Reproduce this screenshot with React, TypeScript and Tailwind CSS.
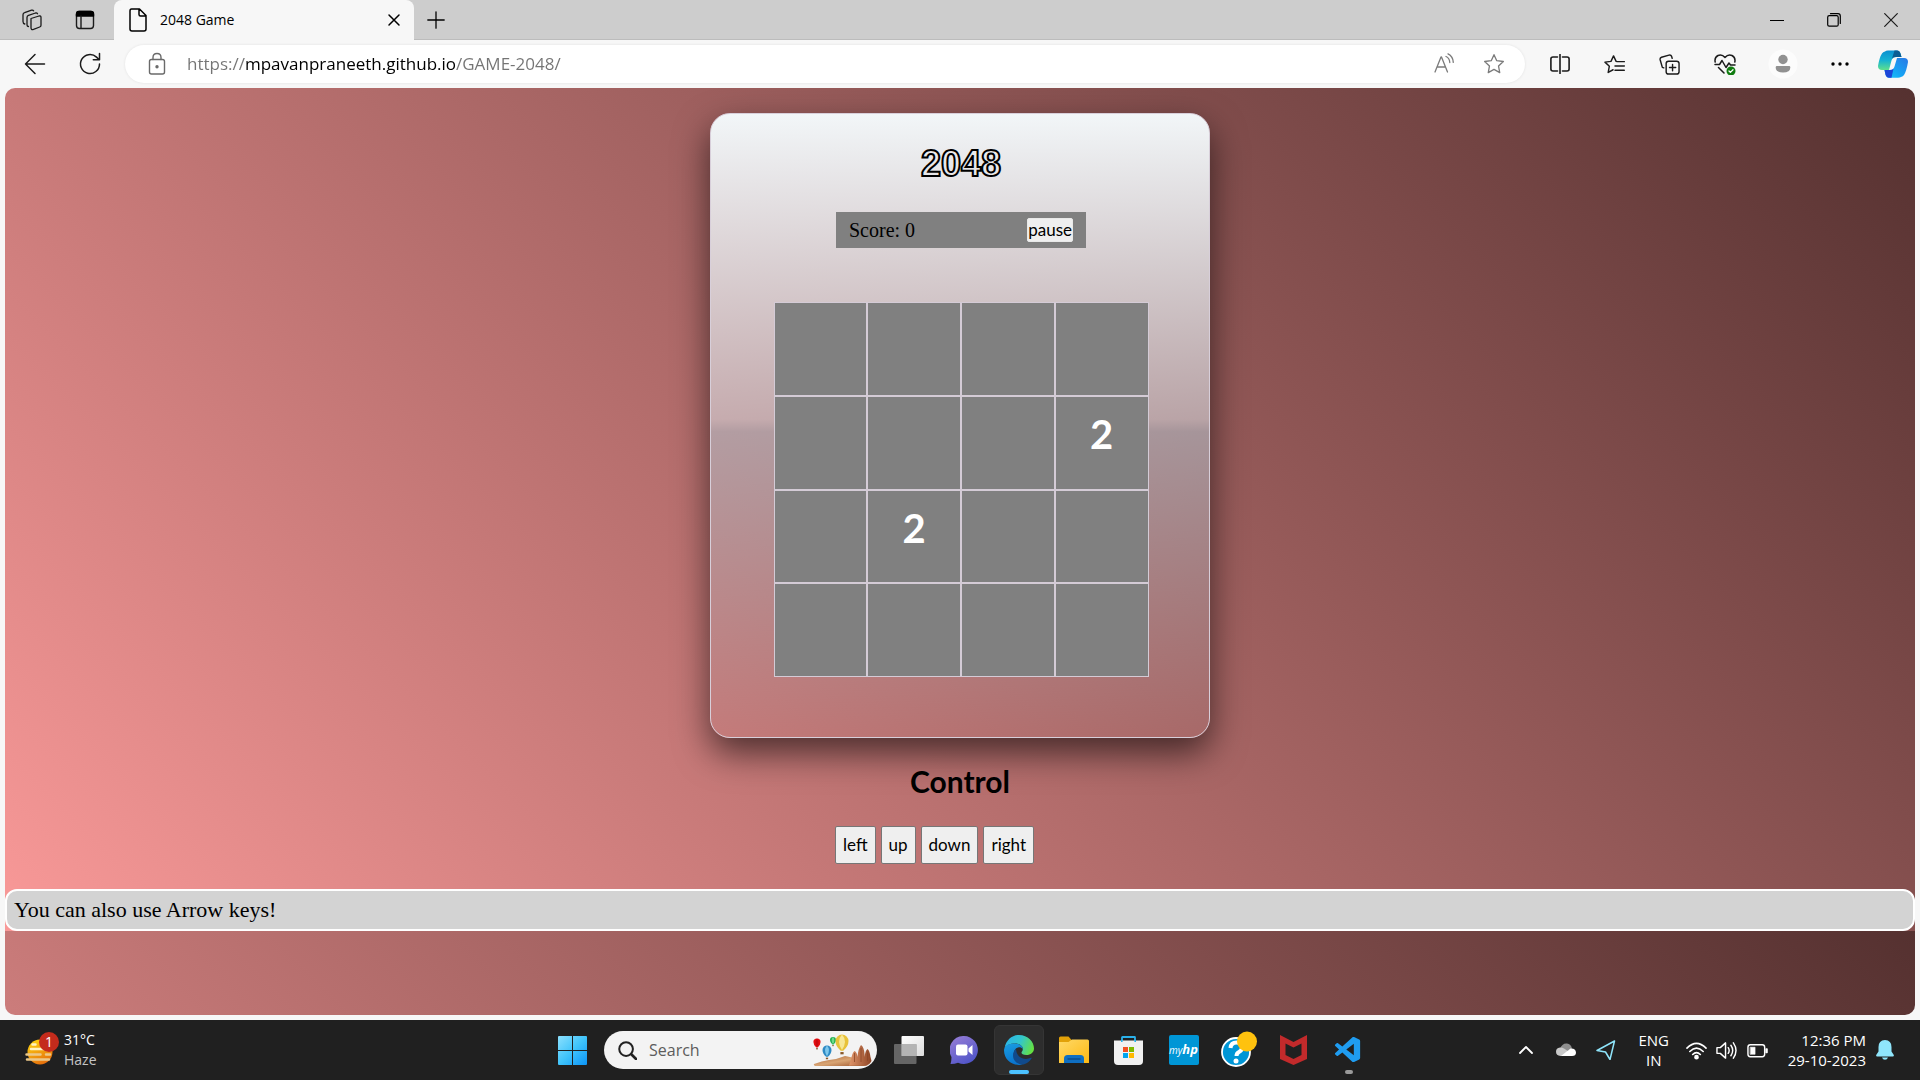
import type { ReactNode } from "react";
import { VscVscode } from "react-icons/vsc";

const CELLS: (number | null)[] = [
  null, null, null, null,
  null, null, null, 2,
  null, 2, null, null,
  null, null, null, null,
];

function IconButton({ label, className, children }: { label: string; className: string; children: ReactNode }) {
  return (
    <button type="button" aria-label={label} className={`flex shrink-0 items-center justify-center ${className}`}>
      {children}
    </button>
  );
}

function Line({ size, vb = 20, width = 1.1, color = "#1b1b1b", children }: { size: number; vb?: number; width?: number; color?: string; children: ReactNode }) {
  return (
    <svg width={size} height={size} viewBox={`0 0 ${vb} ${vb}`} fill="none" stroke={color} strokeWidth={width} strokeLinecap="round" strokeLinejoin="round">
      {children}
    </svg>
  );
}

function TitleBar() {
  return (
    <header className="flex h-10 items-stretch bg-[#cdcdcd] shadow-[inset_0_-1px_0_#bcbcbc]">
      <IconButton label="Workspaces" className="ml-1 w-14">
        <Line size={24} vb={24} width={1.3}>
          <path d="M11 10.5 19 8q2-.5 2 1.4v7.800q0 1.300-1.300 1.800L13.500 21.400Q11 22.200 11 19.800z" />
          <path d="M8.500 18.500Q7 18.500 7 16.500V9.500Q7 8 8.500 7.400L15.500 5q1.500-.3 2 .7" />
          <path d="M4.800 16Q3 15.500 3 13.500V6.800Q3 5.200 4.600 4.700L11.600 2.200q1.400-.4 2 .6" />
        </Line>
      </IconButton>
      <IconButton label="Tab actions" className="w-[50px]">
        <Line size={20} width={1.4}>
          <rect x="1.500" y="1.500" width="17" height="17" rx="3" />
          <path d="M2 2.500Q2 1.500 4 1.500H16Q18.500 1.500 18.500 3.500V6H1.500V4Z" fill="#000" stroke="#000" />
          <path d="M6 6v12" />
        </Line>
      </IconButton>
      <div className="ml-1 flex w-[300px] items-center rounded-t-lg bg-[#f7f7f7] pr-2 pl-3">
        <Line size={24} vb={24} width={1.5} color="#000">
          <path d="M5.500 1h8L20 7.500V21q0 2-2 2H6q-2 0-2-2V3q0-2 1.500-2zM13 1v5.500q0 1.500 1.500 1.500H20" />
        </Line>
        <span className="ml-[10px] text-sm text-black">2048 Game</span>
        <IconButton label="Close tab" className="ml-auto size-6">
          <Line size={14} vb={14} width={1.5} color="#000"><path d="m2 2 10 10M12 2 2 12" /></Line>
        </IconButton>
      </div>
      <IconButton label="New tab" className="w-11">
        <Line size={18} vb={18} width={1.3} color="#000"><path d="M9 .8v16.400M.8 9h16.400" /></Line>
      </IconButton>
      <div className="ml-auto flex pr-px">
        <IconButton label="Minimize" className="w-[57px]">
          <Line size={14} vb={14} width={1.2} color="#000"><path d="M.5 7.500h13" /></Line>
        </IconButton>
        <IconButton label="Restore" className="w-[57px]">
          <Line size={14} vb={14} width={1.2} color="#000">
            <rect x=".7" y="2.700" width="10.500" height="10.500" rx="1.500" />
            <path d="M3.500.7H11q2.300 0 2.300 2.300v7.500" />
          </Line>
        </IconButton>
        <IconButton label="Close" className="w-[57px]">
          <Line size={14} vb={14} width={1.2}><path d="m.7.7 12.600 12.600M13.300.7.7 13.300" /></Line>
        </IconButton>
      </div>
    </header>
  );
}

const STAR = "M10 1.500 12.500 7l6 .7-4.400 4.100 1.100 6L10 14.900 4.800 17.800l1.100-6L1.500 7.700l6-.7z";

function Toolbar() {
  return (
    <div className="flex h-12 items-center bg-[#f7f7f7] pl-2">
      <IconButton label="Back" className="w-[54px]">
        <Line size={22} vb={22} width={1.5}><path d="M20.500 11H1.500M11 1.500 1.500 11l9.500 9.500" /></Line>
      </IconButton>
      <IconButton label="Refresh" className="w-[55px]">
        <Line size={24} vb={24} width={1.5}><path d="M21.500 12A9.500 9.500 0 1 1 18.500 5.100L21 7.500M21.500 1.500v6.200h-6.200" /></Line>
      </IconButton>
      <div className="ml-2 flex h-[38px] min-w-0 flex-1 items-center rounded-full bg-white shadow-[0_0_3px_rgba(0,0,0,0.09)]">
        <IconButton label="View site information" className="ml-5 w-6">
          <Line size={24} vb={24} width={1.4} color="#6a6a6a">
            <rect x="4.500" y="7.500" width="15" height="14.500" rx="2" />
            <path d="M8 7.500V5.500q0-4 4-4t4 4v2" />
            <circle cx="12" cy="14.800" r="1" fill="#6a6a6a" />
          </Line>
        </IconButton>
        <input
          type="text"
          aria-label="Address"
          defaultValue="https://mpavanpraneeth.github.io/GAME-2048/"
          className="ml-[18px] h-8 min-w-0 flex-1 bg-[linear-gradient(90deg,#747474_58px,#000_58px,#000_269px,#747474_269px)] bg-clip-text pb-[2px] text-[17px] text-transparent outline-none"
        />
        <IconButton label="Read aloud" className="w-[50px]">
          <Line size={22} vb={22} width={1.3} color="#7b7b7b">
            <path d="M2 19 8 4h.5l6 15M4 14h8.500M13 3.500q3.500 1.500 3.800 6M15 .9q5 2.500 5.300 8.500" />
          </Line>
        </IconButton>
        <IconButton label="Add to favorites" className="mr-[6px] w-[50px]">
          <Line size={22} width={1.2} color="#7b7b7b"><path d={STAR} /></Line>
        </IconButton>
      </div>
      <IconButton label="Split screen" className="ml-[7px] w-[55px]">
        <Line size={20} width={1.600}>
          <path d="M7.500 3H3Q.9 3 .9 5v10Q.9 17 3 17h4.500M12.500 3H17q2.100 0 2.100 2v10q0 2-2.100 2h-4.500M10 .5v19" />
        </Line>
      </IconButton>
      <IconButton label="Favorites" className="w-[55px]">
        <Line size={21} vb={22} width={1.500}>
          <path d="M13.800 8 12.700 7.700 10 2 7.300 7.700 1 8.500l4.600 4.300-1.200 6.500L9.500 16.500M14 8h7.300M11.500 12.500h9.800M11.500 17h9.800" />
        </Line>
      </IconButton>
      <IconButton label="Collections" className="w-[55px]">
        <Line size={21} vb={22} width={1.500}>
          <rect x="7.500" y="7.500" width="13.500" height="13.500" rx="2.500" />
          <path d="M14.200 11v6.500M11 14.200h6.500M5 14.500 3.500 14 1.200 6Q.8 4 2.600 3.400L10.500 1.200Q12.500.8 13.200 2.500L13.800 4.500" />
        </Line>
      </IconButton>
      <IconButton label="Browser essentials" className="w-[55px]">
        <Line size={22} vb={22} width={1.500}>
          <path d="M1.200 9Q.2 4.500 4 2.500 8 1 11 4.500 14 1 18 2.500 21.800 4.500 20.800 9M1 11.500h4.500L8 7.500l4 7 3-4.500 1.500 2h4.500M4.500 14.500 10 20" />
          <circle cx="17" cy="18" r="4.500" fill="#107c10" stroke="none" />
          <path d="m15 18 1.400 1.400L19 16.800" stroke="#fff" strokeWidth={1.300} />
        </Line>
      </IconButton>
      <IconButton label="Profile" className="w-[62px]">
        <svg width="30" height="30" viewBox="0 0 30 30">
          <circle cx="15" cy="15" r="14.500" fill="#fcfcfc" />
          <circle cx="15" cy="10.500" r="4.700" fill="#919191" />
          <path d="M8.500 17h13q.8 0 .8 1.500 0 5-7.300 5t-7.300-5q0-1.500.8-1.500z" fill="#919191" />
        </svg>
      </IconButton>
      <IconButton label="Settings and more" className="w-[52px]">
        <svg width="18" height="4" viewBox="0 0 18 4"><circle cx="2" cy="2" r="1.700" /><circle cx="9" cy="2" r="1.700" /><circle cx="16" cy="2" r="1.700" /></svg>
      </IconButton>
      <IconButton label="Copilot" className="w-[54px]">
        <svg width="30" height="28" viewBox="0 0 30 28">
          <defs>
            <linearGradient id="cpA" x1="0" y1="0" x2="0" y2="1"><stop offset="0" stopColor="#0a8fd0" /><stop offset=".5" stopColor="#15b2d3" /><stop offset="1" stopColor="#5fe08c" /></linearGradient>
            <linearGradient id="cpB" x1="1" y1="0" x2="0" y2="1"><stop offset="0" stopColor="#2a78e4" /><stop offset=".6" stopColor="#16a6f5" /><stop offset="1" stopColor="#1bc8f4" /></linearGradient>
          </defs>
          <path d="M7 1.500Q8 .5 10 .5h9q2.500 0 3.500 3L23.500 7H18q-3.500 0-4.500 3.500L11 20H4Q0 20 0 16 1.500 7 4 3.500 5 1.800 7 1.500z" fill="url(#cpA)" />
          <path d="M16.500.5H19q2.500 0 3.500 3L23.500 7H18Q14.500 7 13.800 9z" fill="#0b5d93" />
          <path d="M23 27q-1 .7-3 .7h-9q-2.500 0-3.500-3L6.500 20H12q3.500 0 4.500-3.500L19 8h7q4 0 4 4-1.500 9-4 13-1 1.700-3 2z" fill="url(#cpB)" />
          <path d="M13.500 27.700H11q-2.500 0-3.500-3L6.500 20H12q2.500 0 3.500-1.500z" fill="#1d45d8" />
        </svg>
      </IconButton>
    </div>
  );
}

function GameCard() {
  return (
    <section className="flex h-[625px] w-[500px] flex-col items-center rounded-[20px] border border-[#d8cfda] bg-[linear-gradient(180deg,rgba(242,246,248,1)_0%,rgba(216,225,231,0.55)_49%,rgba(181,198,208,0.55)_51%,rgba(224,239,249,0.03)_100%)] pl-[2px] shadow-[0_15px_35px_rgba(0,0,0,0.6)]">
      <h1 className="mt-[26px] font-['Liberation_Sans',sans-serif] text-[36px] leading-[48px] font-bold text-transparent [-webkit-text-stroke:2px_#000]">2048</h1>
      <div className="mt-6 flex h-9 w-[250px] items-center justify-between bg-[gray] px-[13px]">
        <span className="font-['Liberation_Serif'] text-xl text-black">Score: 0</span>
        <button type="button" className="h-6 rounded-[2px] border border-[#e8e8e8] bg-[#efefef] font-['Lato'] text-[17px] leading-5 text-black">pause</button>
      </div>
      <div className="mt-[54px] grid h-[375px] w-[375px] grid-cols-4 grid-rows-4">
        {CELLS.map((value, i) => (
          <div key={i} className="flex justify-center border border-[#d4cbd6] bg-[gray] pt-[9px] font-['Lato'] text-[40px] leading-[56px] font-bold text-white">
            {value}
          </div>
        ))}
      </div>
    </section>
  );
}

function GamePage() {
  return (
    <main className="mx-[5px] mb-[5px] flex flex-1 flex-col overflow-hidden rounded-[10px] bg-[linear-gradient(45deg,#f99998,#553130)] bg-[length:100%_843px]">
      <div className="mt-[25px] flex flex-col items-center">
        <GameCard />
        <h2 className="mt-[23px] font-['Lato'] text-[30px] leading-10 font-bold text-black">Control</h2>
        <div className="mt-[25px] flex w-[250px] gap-[5px]">
          {["left", "up", "down", "right"].map((d) => (
            <button key={d} type="button" className="h-[38px] rounded-[2px] border border-[#767676] bg-[#efefef] px-[7px] font-['Lato'] text-[17px] text-black">
              {d}
            </button>
          ))}
        </div>
      </div>
      <p className="mt-[25px] h-[42px] rounded-xl border-2 border-white bg-[#d3d3d3] px-[7px] font-['Liberation_Serif'] text-[22px] leading-[38px] text-black">
        You can also use Arrow keys!
      </p>
    </main>
  );
}

function WeatherIcon() {
  return (
    <svg width="36" height="36" viewBox="0 0 36 36">
      <defs>
        <linearGradient id="sun" x1=".2" y1="0" x2=".7" y2="1"><stop offset="0" stopColor="#ffd40f" /><stop offset="1" stopColor="#e46a0c" /></linearGradient>
      </defs>
      <circle cx="16" cy="20" r="12.500" fill="url(#sun)" />
      <path d="M8.500 12.500h3M7 17h16" stroke="#fff3c4" strokeWidth="2.500" strokeLinecap="round" />
      <path d="M2.500 22.500h14M22 22.500h4M3 27.500h22" stroke="#ecc889" strokeWidth="2.500" strokeLinecap="round" />
      <circle cx="25" cy="10" r="10" fill="#c42b1c" />
      <text x="25" y="15" textAnchor="middle" fontSize="14" fill="#fff" fontFamily="Open Sans">1</text>
    </svg>
  );
}

function Balloon({ x, y, r, fill, stripe }: { x: number; y: number; r: number; fill: string; stripe: string }) {
  return (
    <g>
      <path d={`M${x - r} ${y}a${r} ${r} 0 0 1 ${2 * r} 0q0 ${r * 0.8} ${-r * 0.8} ${r * 1.5}h${-r * 0.4}q${-r * 0.8} ${-r * 0.7} ${-r * 0.8} ${-r * 1.5}z`} fill={fill} />
      <path d={`M${x} ${y - r}q${-r * 0.9} ${r} 0 ${r * 2.4}q${r * 0.9} ${-r * 1.4} 0 ${-r * 2.4}`} fill={stripe} />
      <rect x={x - r * 0.25} y={y + r * 1.7} width={r * 0.5} height={r * 0.35} fill="#8a5a2b" />
    </g>
  );
}

function Balloons() {
  return (
    <svg width="60" height="34" viewBox="0 0 60 34">
      <defs>
        <linearGradient id="rock" x1="0" y1="0" x2="1" y2="0"><stop offset="0" stopColor="#e0956a" /><stop offset="1" stopColor="#8e4424" /></linearGradient>
        <linearGradient id="dune" x1="0" y1="0" x2="1" y2="1"><stop offset="0" stopColor="#a65f33" /><stop offset=".5" stopColor="#d9a574" /><stop offset="1" stopColor="#9c5228" /></linearGradient>
      </defs>
      <path d="M1 31q8-3 15-4 9-1 16-4 8 1 12 4l11 5q-2 1-5 1H4q-4 0-3-2z" fill="url(#dune)" />
      <path d="M36 32.500 38 27q1-7 3.500-9 2.500 1 3 6 .5-8 3.500-12 3 2 3.500 9v3q1-7 3-8 2 1 3 8l1 4q-2 4-6 4.500z" fill="url(#rock)" />
      <path d="M41.500 20v9M48 15v14M54.500 19v9" stroke="#8b4728" strokeWidth=".8" />
      <Balloon x={4} y={9} r={3.6} fill="#e60f12" stripe="#c9090d" />
      <Balloon x={20} y={7} r={3} fill="#1fae4e" stripe="#6fd98b" />
      <Balloon x={14} y={17} r={4.5} fill="#2e8ac4" stripe="#7fc8ec" />
      <Balloon x={29} y={8} r={6.5} fill="#e8c23a" stripe="#f7e795" />
    </svg>
  );
}

function EdgeIcon() {
  return (
    <svg width="30" height="30" viewBox="0 0 30 30">
      <defs>
        <linearGradient id="edTop" x1="0" y1=".3" x2="1" y2=".6"><stop offset="0" stopColor="#2bb4e8" /><stop offset=".5" stopColor="#33c6cb" /><stop offset="1" stopColor="#66e23f" /></linearGradient>
        <linearGradient id="edLeft" x1="0" y1="0" x2=".3" y2="1"><stop offset="0" stopColor="#1a9ee2" /><stop offset="1" stopColor="#0a74cd" /></linearGradient>
      </defs>
      <path d="M.6 13C2 5 8 0 15 0c9 0 15 6.500 15 13.500 0 4-3.500 6.500-7.500 6.500-3.500 0-5-1.300-5-2.300 0-.8 1.300-1.500 1.300-3.700C18.800 10.500 15 8.500 11 8.500 6 8.500 2 10.500.6 13z" fill="url(#edTop)" />
      <path d="M0 15C.5 10.500 5 8.500 10.500 8.500c5 0 8.300 2.700 8.300 5.500-1-1.300-2.500-1.900-4-1.700-4 .5-5.800 4.700-4.600 8.700 1 4.300 4.500 7.500 8.500 8.500C9 31.500 0 25.500 0 15z" fill="url(#edLeft)" />
      <path d="M12 13.800c-3.500 3-4 8.500-1 12.200 2.300 3 5.700 4 8.500 3.400 3.500-1 6.300-3.200 8-6 .3-.5-.1-.9-.6-.6-6 3-14.500.3-14.900-9z" fill="#114a8b" />
    </svg>
  );
}

function Taskbar() {
  const app = "w-[55px] h-full";
  return (
    <footer className="grid h-[60px] grid-cols-[1fr_auto_1fr] items-center bg-[#202020] text-white">
      <button type="button" className="flex items-center pl-6 text-left">
        <WeatherIcon />
        <span className="ml-1 flex flex-col text-sm leading-5">
          <span>31°C</span>
          <span className="text-[#c4c4c4]">Haze</span>
        </span>
      </button>

      <nav className="flex h-full items-center" aria-label="Apps">
        <IconButton label="Start" className="h-full w-14">
          <svg width="29" height="29" viewBox="0 0 29 29">
            <defs><linearGradient id="win" x1="0" y1="0" x2="1" y2="1"><stop offset="0" stopColor="#8ce0fd" /><stop offset=".5" stopColor="#40c4fb" /><stop offset="1" stopColor="#0c94f7" /></linearGradient></defs>
            <path d="M0 1q0-1 1-1h13v14H0zM15 0h13q1 0 1 1v13H15zM0 15h14v14H1q-1 0-1-1zM15 15h14v13q0 1-1 1H15z" fill="url(#win)" />
          </svg>
        </IconButton>
        <div className="mr-1 ml-1 flex h-[38px] w-[273px] items-center rounded-full bg-[#f3f3f3] pr-1 pl-[14px]">
          <Line size={19} width={2.100} color="#222"><circle cx="8.500" cy="8.500" r="7.200" /><path d="m14 14 5 5" strokeWidth="2.800" /></Line>
          <input type="search" aria-label="Search" placeholder="Search" className="ml-3 h-8 w-0 min-w-0 flex-1 bg-transparent text-base text-[#333] outline-none placeholder:text-[#5c5c5c]" />
          <Balloons />
        </div>
        <IconButton label="Task view" className={app}>
          <svg width="30" height="28" viewBox="0 0 30 28">
            <defs><linearGradient id="tv" x1="0" y1="0" x2="1" y2="1"><stop offset="0" stopColor="#fff" /><stop offset="1" stopColor="#dcdcdc" /></linearGradient></defs>
            <rect x="7.500" y="0" width="22.500" height="20" rx="1" fill="url(#tv)" />
            <rect x="0" y="8" width="22.500" height="20" rx="1" fill="#777" fillOpacity=".8" />
            <path d="M7.500 8h15v12h-15z" fill="#b4b4b4" />
          </svg>
        </IconButton>
        <IconButton label="Chat" className={app}>
          <svg width="28" height="28" viewBox="0 0 28 28">
            <defs><linearGradient id="chat" x1="0" y1="0" x2=".6" y2="1"><stop offset="0" stopColor="#9a7fd6" /><stop offset="1" stopColor="#5256c9" /></linearGradient></defs>
            <path d="M14 0a14 14 0 1 1-6 26.700Q5 28 .5 28 1.500 25 1.500 21A14 14 0 0 1 14 0z" fill="url(#chat)" />
            <rect x="6" y="8.500" width="11.500" height="11" rx="2" fill="#fff" />
            <path d="m18.500 12.500 4-3.500v10l-4-3.500z" fill="#fff" />
          </svg>
        </IconButton>
        <div className="relative flex h-full w-[55px] items-center justify-center">
          <button type="button" aria-label="Edge" className="flex size-[50px] items-center justify-center rounded-md border border-[#353535] bg-[#2d2d2d]">
            <EdgeIcon />
          </button>
          <span className="absolute bottom-[6px] h-1 w-5 rounded-full bg-[#4cc2ff]" />
        </div>
        <IconButton label="File Explorer" className={app}>
          <svg width="30" height="28" viewBox="0 0 30 28">
            <defs><linearGradient id="fold" x1="0" y1="0" x2="1" y2="1"><stop offset="0" stopColor="#ffd967" /><stop offset="1" stopColor="#fdb913" /></linearGradient></defs>
            <path d="M0 2q0-1.500 1.500-1.500h8L13 4.500h15V12H0z" fill="#e2a108" />
            <path d="M0 6h9.500L13 3.500h15.500Q30 3.500 30 5v22H0z" fill="url(#fold)" />
            <path d="M5 22.500q0-3.500 3.500-3.500h13q3.500 0 3.500 3.500V27H5z" fill="#0f6fc2" />
            <path d="M9 23h12" stroke="#0a4d8f" strokeWidth="1.300" strokeLinecap="round" />
          </svg>
        </IconButton>
        <IconButton label="Microsoft Store" className={app}>
          <svg width="29" height="29" viewBox="0 0 29 29">
            <path d="M8 6V1.500Q8 1 8.500 1h12q.5 0 .5.500V6" fill="none" stroke="#2ab1ea" strokeWidth="1.800" />
            <path d="M0 4.500h29V25q0 4-4 4H4q-4 0-4-4z" fill="#f1f1f1" />
            <path d="M7.800 4v2M21.200 4v2" stroke="#2ab1ea" strokeWidth="1.600" />
            <path d="M9 11h5v5H9z" fill="#f25022" /><path d="M15 11h5v5h-5z" fill="#7fba00" />
            <path d="M9 17h5v5H9z" fill="#00a4ef" /><path d="M15 17h5v5h-5z" fill="#ffb900" />
          </svg>
        </IconButton>
        <IconButton label="myHP" className={app}>
          <span className="flex size-[30px] items-center justify-center rounded-[2px] bg-[#0096d6] font-['Open_Sans'] text-[10px] italic">
            my<b className="text-[13px]">hp</b>
          </span>
        </IconButton>
        <IconButton label="HP Support" className={app}>
          <svg width="36" height="38" viewBox="0 0 36 38">
            <circle cx="15" cy="21" r="14" fill="#0096d6" stroke="#fff" strokeWidth="1.800" />
            <path d="M9.500 17q.5-5.500 6-5.500t5.500 5q0 3-3 4.500-2.500 1.200-2.500 4" fill="none" stroke="#fff" strokeWidth="4" />
            <circle cx="15" cy="30" r="2.500" fill="#fff" />
            <circle cx="26" cy="10.500" r="10" fill="#ffc20e" />
          </svg>
        </IconButton>
        <IconButton label="McAfee" className={app}>
          <svg width="27" height="30" viewBox="0 0 27 30">
            <path d="M0 0 13.500 7 27 0v24l-13.500 6L0 24z" fill="#c22a2b" />
            <path d="M5.500 8.500 13.500 12.500l8-4V20l-8 4-8-4z" fill="#202020" />
          </svg>
        </IconButton>
        <div className="relative flex h-full w-[55px] items-center justify-center">
          <IconButton label="Visual Studio Code" className="size-[50px]">
            <VscVscode size={31} color="#1f9cf0" />
          </IconButton>
          <span className="absolute bottom-[6px] h-1 w-2 rounded-full bg-[#9a9a9a]" />
        </div>
      </nav>

      <div className="flex h-full items-center justify-end pr-[26px]">
        <IconButton label="Show hidden icons" className="w-10">
          <Line size={14} vb={14} width={1.800} color="#fff"><path d="m1 10 6-6 6 6" /></Line>
        </IconButton>
        <IconButton label="OneDrive" className="w-10">
          <svg width="20" height="14" viewBox="0 0 20 14">
            <path d="M4 6Q6 0 11 .5q4 .5 5 5l-5 3z" fill="#8d8d8d" />
            <path d="M4.500 13Q0 12.500 0 8.800 0 5 4 4.500q2-.3 4 1l6 4-4 3.500z" fill="#c9c9c9" />
            <path d="M5 13 14.500 5.500q5-.5 5.500 4 0 3.500-4 3.500z" fill="#fff" />
          </svg>
        </IconButton>
        <IconButton label="Location" className="w-10">
          <Line size={20} width={1.500} color="#8fe5fb"><path d="M18.500 1 1 10.500l8.500 1.500 4.500 7.500z" /></Line>
        </IconButton>
        <button type="button" className="w-14 text-center text-[15px] leading-5">ENG<br />IN</button>
        <button type="button" aria-label="Network, volume and battery" className="flex w-[90px] items-center justify-between px-[4px]">
          <Line size={21} vb={22} width={1.700} color="#fff">
            <path d="M1 8.500q10-10 20 0M4 12q7-7 14 0M7 15.200q4-4 8 0" /><circle cx="11" cy="18" r="1.600" fill="#fff" />
          </Line>
          <Line size={21} vb={22} width={1.500} color="#fff">
            <path d="M1 8h3.500L10 3v16l-5.500-5H1zM12.800 8q2 3 0 6M15.600 5.500q3.800 5.500 0 11M18.200 3q5.500 8 0 16" />
          </Line>
          <Line size={21} vb={22} width={1.500} color="#fff">
            <rect x="1" y="5" width="17.500" height="12.500" rx="2.500" /><rect x="3.500" y="7.500" width="5" height="7.500" fill="#fff" strokeWidth=".5" /><path d="M20 9.500h1v3.500h-1z" fill="#fff" />
          </Line>
        </button>
        <button type="button" className="ml-4 text-right text-[15px] leading-5 whitespace-nowrap">12:36 PM<br />29-10-2023</button>
        <IconButton label="Notifications" className="ml-[10px]">
          <svg width="18" height="20" viewBox="0 0 18 20" fill="#8fe5fb">
            <path d="M9 0q6.500.3 6.500 7v4.500L17.800 15q.4 1.500-1 1.500H1.200q-1.400 0-1-1.500l2.300-3.500V7Q2.500.3 9 0zM6 17.500h6q-.8 2.300-3 2.300t-3-2.300z" />
          </svg>
        </IconButton>
      </div>
    </footer>
  );
}

export default function App() {
  return (
    <div className="flex min-h-screen flex-col bg-[#f7f7f7] font-['Open_Sans',sans-serif]">
      <TitleBar />
      <Toolbar />
      <GamePage />
      <Taskbar />
    </div>
  );
}
